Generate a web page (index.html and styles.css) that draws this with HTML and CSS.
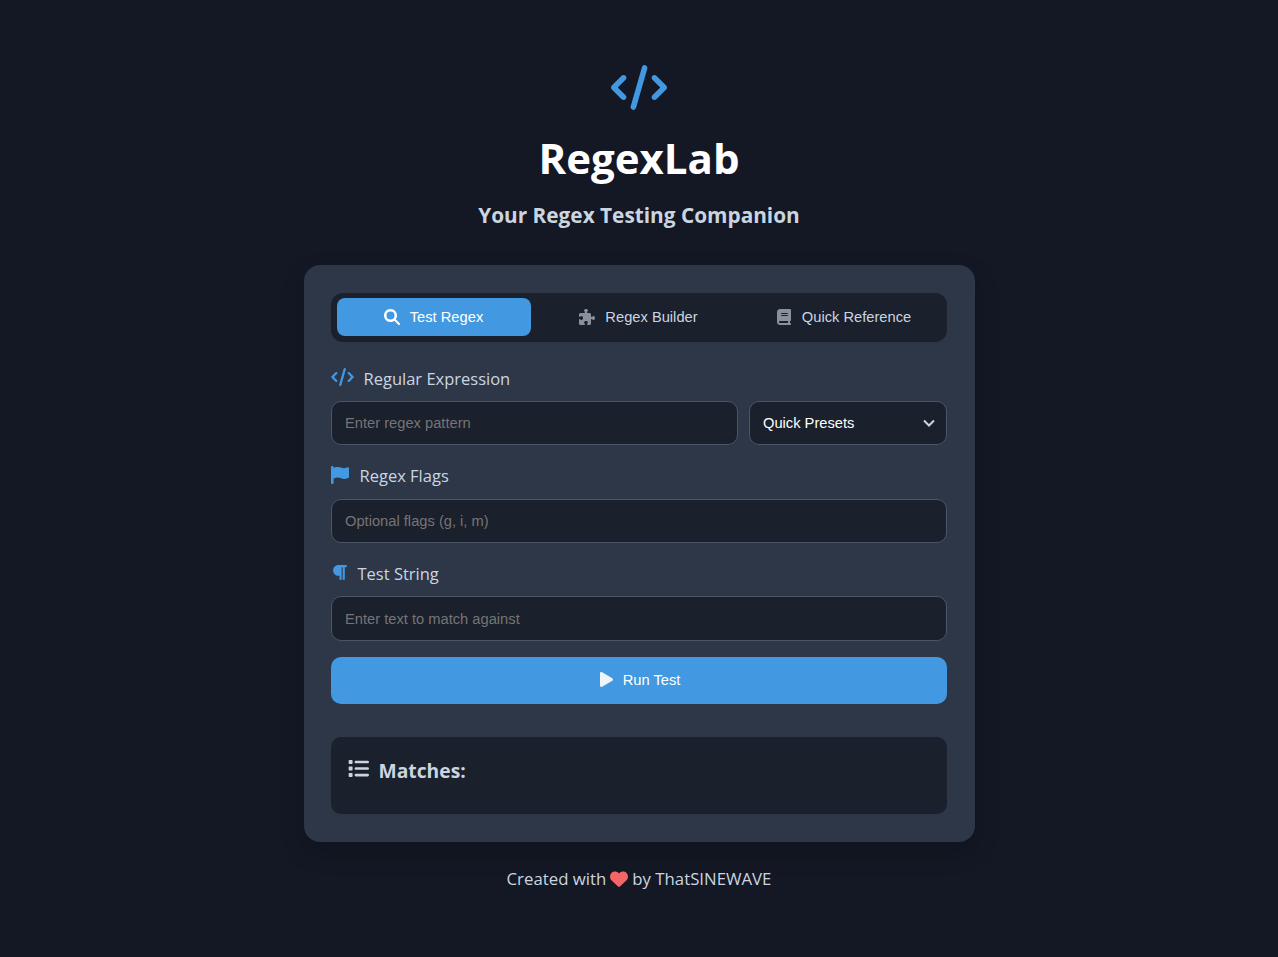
FILE: index.html
```html
<!DOCTYPE html>
<html lang="en">
<head>
    <meta charset="UTF-8">
    <title>RegexLab</title>
    <link rel="stylesheet" href="styles.css">
</head>
<body>
    <header class="page-header">
        <svg class="logo-icon" viewBox="0 0 640 512"><path d="M392.8 1.2c-17-4.9-34.7 5-39.6 22l-128 448c-4.9 17 5 34.7 22 39.6s34.7-5 39.6-22l128-448c4.9-17-5-34.7-22-39.6zm80.6 120.1c-12.5 12.5-12.5 32.8 0 45.3L562.7 256l-89.4 89.4c-12.5 12.5-12.5 32.8 0 45.3s32.8 12.5 45.3 0l112-112c12.5-12.5 12.5-32.8 0-45.3l-112-112c-12.5-12.5-32.8-12.5-45.3 0zm-306.7 0c-12.5-12.5-32.8-12.5-45.3 0l-112 112c-12.5 12.5-12.5 32.8 0 45.3l112 112c12.5 12.5 32.8 12.5 45.3 0s12.5-32.8 0-45.3L77.3 256l89.4-89.4c12.5-12.5 12.5-32.8 0-45.3z"/></svg>
        <h1>RegexLab</h1>
        <p class="tagline">Your Regex Testing Companion</p>
    </header>

    <main class="card">
        <!-- Tabs -->
        <div class="tabs">
            <button class="tab active">
                <svg class="tab-icon" viewBox="0 0 512 512"><path d="M416 208c0 45.9-14.9 88.3-40 122.7L502.6 457.4c12.5 12.5 12.5 32.8 0 45.3s-32.8 12.5-45.3 0L330.7 376c-34.4 25.2-76.8 40-122.7 40C93.1 416 0 322.9 0 208S93.1 0 208 0S416 93.1 416 208zM208 336a128 128 0 1 0 0-256 128 128 0 1 0 0 256z"/></svg>
                Test Regex
            </button>
            <button class="tab">
                <svg class="tab-icon" viewBox="0 0 512 512"><path d="M192 104.8c0-9.2-5.8-17.3-13.2-22.8C167.2 73.3 160 61.3 160 48c0-26.5 28.7-48 64-48s64 21.5 64 48c0 13.3-7.2 25.3-18.8 34c-7.4 5.5-13.2 13.6-13.2 22.8c0 12.8 10.4 23.2 23.2 23.2H336c26.5 0 48 21.5 48 48v56.8c0 12.8 10.4 23.2 23.2 23.2c9.2 0 17.3-5.8 22.8-13.2c8.7-11.6 20.7-18.8 34-18.8c26.5 0 48 28.7 48 64s-21.5 64-48 64c-13.3 0-25.3-7.2-34-18.8c-5.5-7.4-13.6-13.2-22.8-13.2c-12.8 0-23.2 10.4-23.2 23.2V464c0 26.5-21.5 48-48 48H279.2c-12.8 0-23.2-10.4-23.2-23.2c0-9.2 5.8-17.3 13.2-22.8c11.6-8.7 18.8-20.7 18.8-34c0-26.5-28.7-48-64-48s-64 21.5-64 48c0 13.3 7.2 25.3 18.8 34c7.4 5.5 13.2 13.6 13.2 22.8c0 12.8-10.4 23.2-23.2 23.2H48c-26.5 0-48-21.5-48-48V343.2C0 330.4 10.4 320 23.2 320c9.2 0 17.3 5.8 22.8 13.2C54.7 344.8 66.7 352 80 352c26.5 0 48-28.7 48-64s-21.5-64-48-64c-13.3 0-25.3 7.2-34 18.8C40.5 250.2 32.4 256 23.2 256C10.4 256 0 245.6 0 232.8V176c0-26.5 21.5-48 48-48H168.8c12.8 0 23.2-10.4 23.2-23.2z"/></svg>
                Regex Builder
            </button>
            <button class="tab">
                <svg class="tab-icon" viewBox="0 0 448 512"><path d="M96 0C43 0 0 43 0 96V416c0 53 43 96 96 96H384h32c17.7 0 32-14.3 32-32s-14.3-32-32-32V384c17.7 0 32-14.3 32-32V32c0-17.7-14.3-32-32-32H384 96zm0 384H352v64H96c-17.7 0-32-14.3-32-32s14.3-32 32-32zm32-240c0-8.8 7.2-16 16-16H336c8.8 0 16 7.2 16 16s-7.2 16-16 16H144c-8.8 0-16-7.2-16-16zm16 48H336c8.8 0 16 7.2 16 16s-7.2 16-16 16H144c-8.8 0-16-7.2-16-16s7.2-16 16-16z"/></svg>
                Quick Reference
            </button>
        </div>

        <!-- Form fields -->
        <label class="field-label">
            <svg class="label-icon code" viewBox="0 0 640 512"><path d="M392.8 1.2c-17-4.9-34.7 5-39.6 22l-128 448c-4.9 17 5 34.7 22 39.6s34.7-5 39.6-22l128-448c4.9-17-5-34.7-22-39.6zm80.6 120.1c-12.5 12.5-12.5 32.8 0 45.3L562.7 256l-89.4 89.4c-12.5 12.5-12.5 32.8 0 45.3s32.8 12.5 45.3 0l112-112c12.5-12.5 12.5-32.8 0-45.3l-112-112c-12.5-12.5-32.8-12.5-45.3 0zm-306.7 0c-12.5-12.5-32.8-12.5-45.3 0l-112 112c-12.5 12.5-12.5 32.8 0 45.3l112 112c12.5 12.5 32.8 12.5 45.3 0s12.5-32.8 0-45.3L77.3 256l89.4-89.4c12.5-12.5 12.5-32.8 0-45.3z"/></svg>
            Regular Expression
        </label>
        <div class="input-row">
            <input type="text" class="text-input" placeholder="Enter regex pattern">
            <div class="select-wrap">
                <select class="presets">
                    <option>Quick Presets</option>
                </select>
                <svg class="chevron" viewBox="0 0 12 8"><path d="M1 1.5l5 5 5-5"/></svg>
            </div>
        </div>

        <label class="field-label">
            <svg class="label-icon flag" viewBox="0 0 448 512" preserveAspectRatio="none"><path d="M64 32C64 14.3 49.7 0 32 0S0 14.3 0 32V64 368 480c0 17.7 14.3 32 32 32s32-14.3 32-32V352l64.3-16.1c41.1-10.3 84.6-5.5 122.5 13.4c44.2 22.1 95.5 24.8 141.7 7.4l34.7-13c12.5-4.7 20.8-16.6 20.8-30V66.1c0-23-24.2-38-44.8-27.7l-9.6 4.8c-46.3 23.2-100.8 23.2-147.1 0c-35.1-17.6-75.4-22-113.5-12.5L64 48V32z"/></svg>
            Regex Flags
        </label>
        <input type="text" class="text-input" placeholder="Optional flags (g, i, m)">

        <label class="field-label">
            <svg class="label-icon para" viewBox="0 0 448 512"><path d="M192 32h64H416c17.7 0 32 14.3 32 32s-14.3 32-32 32H384l0 352c0 17.7-14.3 32-32 32s-32-14.3-32-32l0-352H288l0 352c0 17.7-14.3 32-32 32s-32-14.3-32-32l0-96H192c-88.4 0-160-71.6-160-160s71.6-160 160-160z"/></svg>
            Test String
        </label>
        <input type="text" class="text-input" placeholder="Enter text to match against">

        <button class="run-btn">
            <svg class="run-icon" viewBox="0 0 448 512"><path d="M424.4 214.7L72.4 6.6C43.8-10.3 0 6.1 0 47.9V464c0 37.5 40.7 60.1 72.4 41.3l352-208c31.4-18.5 31.5-64.1 0-82.6z"/></svg>
            Run Test
        </button>

        <!-- Results -->
        <section class="results">
            <h3>
                <svg class="list-icon" viewBox="0 0 512 512"><path d="M40 48C26.7 48 16 58.7 16 72v48c0 13.3 10.7 24 24 24H88c13.3 0 24-10.7 24-24V72c0-13.3-10.7-24-24-24H40zM192 64c-17.7 0-32 14.3-32 32s14.3 32 32 32H480c17.7 0 32-14.3 32-32s-14.3-32-32-32H192zm0 160c-17.7 0-32 14.3-32 32s14.3 32 32 32H480c17.7 0 32-14.3 32-32s-14.3-32-32-32H192zm0 160c-17.7 0-32 14.3-32 32s14.3 32 32 32H480c17.7 0 32-14.3 32-32s-14.3-32-32-32H192zM16 232v48c0 13.3 10.7 24 24 24H88c13.3 0 24-10.7 24-24V232c0-13.3-10.7-24-24-24H40c-13.3 0-24 10.7-24 24zM40 368c-13.3 0-24 10.7-24 24v48c0 13.3 10.7 24 24 24H88c13.3 0 24-10.7 24-24V392c0-13.3-10.7-24-24-24H40z"/></svg>
                Matches:
            </h3>
        </section>
    </main>

    <footer class="page-footer">
        Created with
        <svg class="heart" viewBox="0 0 512 512"><path d="M47.6 300.4L228.3 469.1c7.5 7 17.4 10.9 27.7 10.9s20.2-3.9 27.7-10.9L464.4 300.4c30.4-28.3 47.6-68 47.6-109.5v-5.8c0-69.9-50.5-129.5-119.4-141C347 36.5 300.6 51.4 268 84L256 96 244 84c-32.6-32.6-79-47.5-124.6-39.9C50.5 55.6 0 115.2 0 185.1v5.8c0 41.5 17.2 81.2 47.6 109.5z"/></svg>
        by ThatSINEWAVE
    </footer>
</body>
</html>
```

FILE: styles.css
```css
* {
    box-sizing: border-box;
}

body {
    margin: 0;
    min-height: 957px;
    padding-top: 65px;
    background-color: #131824;
    color: #cbd5e0;
    font-family: "Open Sans", "Noto Sans", sans-serif;
    display: flex;
    flex-direction: column;
    align-items: center;
}

.page-header {
    display: flex;
    flex-direction: column;
    align-items: center;
}

.logo-icon {
    width: 56px;
    height: 45px;
    fill: #4299e1;
}

h1 {
    margin: 18px 0 0;
    color: #fff;
    font-size: 42px;
    line-height: 60px;
    font-weight: 700;
}

.tagline {
    margin: 12px 0 0;
    font-size: 20.8px;
    line-height: 30px;
    font-weight: 700;
}

.card {
    width: 671px;
    margin-top: 35px;
    padding: 28px 28px 28px 27px;
    background-color: #2d3748;
    border-radius: 16px;
    box-shadow: 0 10px 25px rgba(0, 0, 0, 0.2);
}

.tabs {
    display: flex;
    gap: 11px;
    padding: 5px 6px 6px;
    background-color: #1a202c;
    border-radius: 12px;
}

.tab {
    flex: 1;
    height: 38px;
    display: flex;
    align-items: center;
    justify-content: center;
    gap: 10px;
    border: none;
    border-radius: 8px;
    background: none;
    color: #cbd5e0;
    font-family: "Liberation Sans", Arial, sans-serif;
    font-size: 14.7px;
}

.tab.active {
    background-color: #4299e1;
    color: #fff;
}

.tab-icon {
    width: 16px;
    height: 16px;
    fill: #8b919c;
}

.tab.active .tab-icon {
    fill: #fff;
}

.field-label {
    display: flex;
    align-items: center;
    gap: 10px;
    height: 26px;
    margin: 23px 0 10px;
    font-size: 16.5px;
}

.input-row + .field-label,
.text-input + .field-label {
    margin-top: 17.3px;
}

.label-icon {
    fill: #4299e1;
    flex-shrink: 0;
    position: relative;
    top: -1px;
}

.label-icon.code {
    width: 23px;
    height: 18px;
}

.label-icon.flag {
    width: 18px;
    height: 18px;
    margin-right: 1px;
}

.label-icon.para {
    width: 17px;
    height: 17px;
}

.input-row {
    display: flex;
    gap: 11px;
}

.text-input,
.presets {
    height: 44.4px;
    padding: 0 13.5px;
    background-color: #1a202c;
    border: 1px solid #4a5568;
    border-radius: 10px;
    color: #fff;
    font-family: "Liberation Sans", Arial, sans-serif;
    font-size: 14.7px;
}

.text-input {
    display: block;
    width: 100%;
}

.text-input::placeholder {
    color: #757575;
}

.input-row .text-input {
    flex: 1;
    width: auto;
}

.select-wrap {
    position: relative;
    width: 198px;
}

.presets {
    width: 100%;
    appearance: none;
}

.chevron {
    position: absolute;
    right: 12px;
    top: 18px;
    width: 12px;
    height: 8px;
    fill: none;
    stroke: #cbd5e0;
    stroke-width: 2;
}

.run-btn {
    width: 100%;
    height: 47px;
    margin-top: 16px;
    padding-left: 9px;
    display: flex;
    align-items: center;
    justify-content: center;
    gap: 10px;
    border: none;
    border-radius: 10px;
    background-color: #4299e1;
    color: #fff;
    font-family: "Liberation Sans", Arial, sans-serif;
    font-size: 14.7px;
}

.run-icon {
    width: 13px;
    height: 15px;
    fill: #f0f4f8;
    position: relative;
    top: -1px;
}

.results {
    height: 77px;
    margin-top: 33.2px;
    padding: 20px 17px;
    background-color: #1a202c;
    border-radius: 10px;
}

.results h3 {
    margin: 0;
    display: flex;
    align-items: center;
    gap: 10px;
    font-size: 19.3px;
    line-height: 28px;
    font-weight: 700;
}

.list-icon {
    width: 21px;
    height: 21px;
    fill: #cbd5e0;
    position: relative;
    top: -2px;
}

.page-footer {
    margin-top: 25px;
    display: flex;
    align-items: center;
    gap: 4px;
    font-size: 16.8px;
    line-height: 24px;
}

.heart {
    width: 18px;
    height: 18px;
    fill: #f56565;
}
```
